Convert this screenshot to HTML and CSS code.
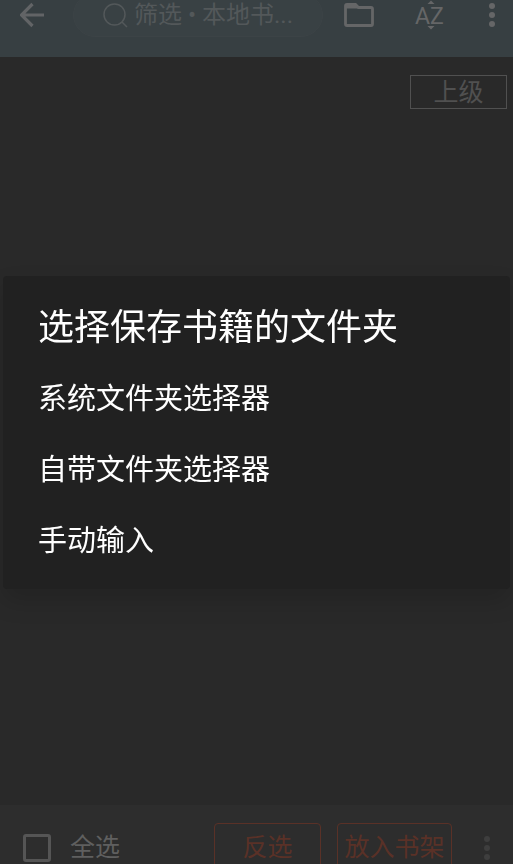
FILE: index.html
```html
<!DOCTYPE html>
<html lang="zh-CN">
<head>
<meta charset="utf-8">
<meta name="viewport" content="width=device-width, initial-scale=1">
<title>本地书籍</title>
<link rel="stylesheet" href="styles.css">
</head>

<body>
<header class="topbar">
  <div class="toolbar">
    <button class="icon-btn back" type="button" aria-label="返回">
      <svg width="26" height="26" viewBox="0 0 26 26" fill="none" stroke="currentColor" stroke-width="3.200"><path d="M24 13H2M12.500 2L1.500 13l11 11"/></svg>
    </button>
    <label class="search">
      <svg width="26" height="26" viewBox="0 0 26 26" fill="none" stroke="currentColor" stroke-width="1.500"><circle cx="11.500" cy="12.500" r="10.500"/><path d="M19 20l5 5"/></svg>
      <input type="text" placeholder="筛选 • 本地书..." aria-label="筛选">
    </label>
    <button class="icon-btn folder" type="button" aria-label="选择文件夹">
      <svg width="30" height="24" viewBox="0 0 30 24" fill="none" stroke="currentColor" stroke-width="2.800"><path d="M3 1.500h8.500l3 3H27q1.500 0 1.500 1.500v15q0 1.500-1.500 1.500H3q-1.500 0-1.500-1.500V3Q1.500 1.500 3 1.500z"/><path d="M2 2h10l3 3.500H2z" fill="currentColor" stroke="none"/></svg>
    </button>
    <button class="icon-btn sort" type="button" aria-label="排序">
      <svg width="32" height="30" viewBox="0 0 32 30" fill="currentColor"><path d="M13.500 4L17 .5 20.500 4zM13.500 26h7L17 29.500z"/><text class="az" x="1" y="24">AZ</text></svg>
    </button>
    <button class="icon-btn more" type="button" aria-label="更多">
      <svg width="6" height="26" viewBox="0 0 6 26" fill="currentColor"><circle cx="3" cy="4" r="3"/><circle cx="3" cy="13" r="3"/><circle cx="3" cy="22" r="3"/></svg>
    </button>
  </div>
</header>

<main class="files">
  <button class="up" type="button">上级</button>
</main>

<footer class="actions">
  <label class="check-all"><input type="checkbox">全选</label>
  <button class="action invert" type="button">反选</button>
  <button class="action add" type="button">放入书架</button>
  <button class="icon-btn more-actions" type="button" aria-label="更多操作">
    <svg width="6" height="26" viewBox="0 0 6 26" fill="currentColor"><circle cx="3" cy="4" r="3"/><circle cx="3" cy="13" r="3"/><circle cx="3" cy="22" r="3"/></svg>
  </button>
</footer>

<div class="overlay">
  <section class="picker" role="dialog" aria-modal="true" aria-labelledby="picker-title">
    <h2 id="picker-title">选择保存书籍的文件夹</h2>
    <button class="option" type="button">系统文件夹选择器</button>
    <button class="option" type="button">自带文件夹选择器</button>
    <button class="option" type="button">手动输入</button>
  </section>
</div>
</body>
</html>
```
FILE: styles.css
```css
* {
  box-sizing: border-box;
}

body {
  display: flex;
  flex-direction: column;
  height: 100vh;
  margin: 0;
  overflow: hidden;
  background: #292929;
  color: #5f5f5f;
  font-family: Roboto, "Noto Sans CJK SC", sans-serif;
  font-size: 25px;
}

button,
input {
  padding: 0;
  border: 0;
  background: none;
  color: inherit;
  font: inherit;
}

svg {
  display: block;
  flex: none;
}

.topbar {
  flex: none;
  padding-bottom: 20px;
  background: #373f42;
}

.toolbar {
  display: flex;
  align-items: center;
  height: 44px;
  margin-top: -7px;
  padding: 0 18px 0 20px;
}

.icon-btn {
  flex: none;
}

.back {
  color: #626466;
}

.search {
  display: flex;
  flex: 1;
  align-items: center;
  gap: 5px;
  height: 44px;
  min-width: 0;
  margin: 0 21px 0 27px;
  padding-left: 29px;
  border: 1px solid #3c4346;
  border-radius: 22px;
  background: #394144;
  color: #53585a;
  font-size: 24px;
}

.search input {
  flex: 1;
  min-width: 0;
}

.search input::placeholder {
  color: inherit;
  opacity: 1;
}

.folder,
.sort,
.more {
  color: #656667;
}

.sort {
  margin: 0 43px 0 40px;
}

.az {
  font-family: Roboto, sans-serif;
  font-size: 23px;
}

.files {
  display: flex;
  flex: 1;
  align-items: flex-start;
  justify-content: flex-end;
  padding: 18px 6px;
}

.up {
  width: 97px;
  height: 34px;
  border: 1px solid #505050;
  color: #505050;
  line-height: 33px;
}

.actions {
  display: flex;
  flex: none;
  align-items: flex-start;
  height: 59px;
  padding: 18px 23px 0;
  overflow: hidden;
  background: #2d2d2d;
}

.check-all {
  display: flex;
  flex: 1;
  align-items: center;
  gap: 19px;
  height: 50px;
  line-height: 30px;
}

.check-all input {
  width: 28px;
  height: 28px;
  margin: 0;
  border: 3px solid #555;
  border-radius: 3px;
  appearance: none;
}

.action {
  height: 50px;
  border: 1px solid #5a3127;
  border-radius: 4px;
  color: #5a3127;
  line-height: 30px;
}

.invert {
  width: 107px;
  margin-right: 16px;
}

.add {
  width: 115px;
}

.more-actions {
  height: 50px;
  margin-left: 32px;
  color: #3e3e3e;
}

.overlay {
  position: fixed;
  inset: 0;
  display: flex;
  align-items: center;
  padding: 0 3px;
}

.picker {
  flex: 1;
  padding: 17px 35px 12px;
  border-radius: 4px;
  background: #212121;
  box-shadow: 0 12px 24px rgba(0, 0, 0, 0.15);
  color: #fff;
}

.picker h2 {
  margin: 0;
  font-size: 36px;
  font-weight: 400;
  line-height: 71px;
}

.option {
  display: block;
  width: 100%;
  font-size: 29px;
  line-height: 71px;
  text-align: left;
}
```
